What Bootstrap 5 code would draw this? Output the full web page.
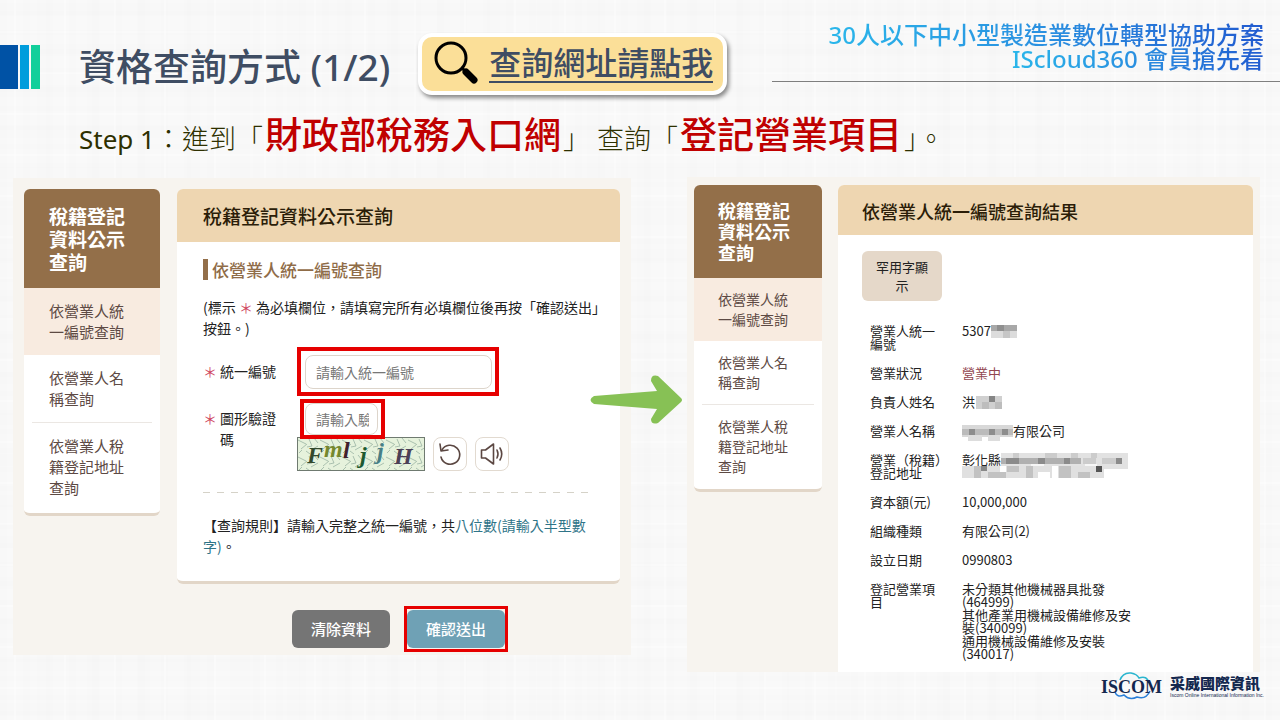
<!DOCTYPE html>
<html lang="zh-Hant">
<head>
<meta charset="utf-8">
<meta name="viewport" content="width=device-width, initial-scale=1">
<title>資格查詢方式</title>
<link href="https://cdn.jsdelivr.net/npm/bootstrap@5.3.0/dist/css/bootstrap.min.css" rel="stylesheet">
<style>
  body {
    font-family: "Noto Sans CJK TC", sans-serif;
    color: #222;
    background-color: #f9f9f9;
    background-image:
      repeating-linear-gradient(90deg, transparent 0 14px, rgba(255,255,255,.35) 14px 16px, transparent 16px 37px, rgba(0,0,0,.005) 37px 50px),
      repeating-linear-gradient(0deg, transparent 0 11px, rgba(255,255,255,.3) 11px 13px, transparent 13px 29px, rgba(0,0,0,.005) 29px 41px),
      repeating-linear-gradient(90deg, rgba(0,0,0,.005) 0 7px, transparent 7px 23px),
      repeating-linear-gradient(0deg, rgba(0,0,0,.005) 0 5px, transparent 5px 19px);
  }
  .deck { font-family: "Noto Sans", "Noto Sans CJK TC", sans-serif; }
  .top-bar { padding-top: 23px; }
  .title-row { margin-top: 10px; height: 68px; }
  .stripe { height: 44px; width: 9px; }
  .stripe-a { width: 18px; background: #0052a5; }
  .stripe-b { background: #009ddc; }
  .stripe-c { background: #12cf9b; }
  .stripes { gap: 2px; width: 40px; }
  .slide-title { font-size: 37px; line-height: 48px; color: #3f4d63; margin: 0 28px 0 39px; font-weight: 500; white-space: nowrap; }
  .query-link {
    background: #fbdf98; border: 4px solid #fff; border-radius: 14px; padding: 2px 10px 2px 12px;
    box-shadow: 2px 3px 4px rgba(0,0,0,.45); color: #3f4d63; font-size: 32px;
    margin-bottom: 6px; height: 62px; gap: 11px; white-space: nowrap; font-weight: 500;
  }
  .query-link span { border-bottom: 2px solid #3f4d63; line-height: 36px; }
  .promo { width: 508px; border-bottom: 1px solid #7f7f7f; height: 59px; padding-right: 16px; }
  .promo span {
    display: block; width: max-content; margin-left: auto; font-size: 24px; line-height: 24px; font-weight: 500; color: transparent;
    background: linear-gradient(90deg, #2ab6ea, #2a8fe0 50%, #215bd0); background-clip: text; -webkit-background-clip: text;
  }
  .step { font-size: 27px; line-height: 48px; padding: 10px 0 0 79px; height: 76px; color: #2e3000; font-weight: 300; margin: 0; }
  .step span { font-size: 26px; font-weight: 400; }
  .step strong { font-size: 37px; font-weight: 500; color: #c00000; margin: 0 2px; }

  .panels { padding: 0 20px 0 13px; }
  .shot { background: #f7f4ef; min-width: 0; }
  .shot-a { flex: 596 1 0; padding: 11px 11px 7px; margin-top: 1px; }
  .shot-b { flex: 559 1 0; padding: 8px 7px 0; }
  .between { width: 56px; }
  .between svg { position: absolute; left: -41px; top: 197px; }
  .side { background: #fff; border-bottom: 3px solid #e2d6c8; border-radius: 6px; overflow: hidden; color: #5d4a44; }
  .side h2 { background: #936f49; color: #fff; margin: 0; font-weight: 600; }
  .side a { display: block; color: inherit; text-decoration: none; }
  .side a.on { background: #f8ebe0; }
  .side hr { margin: 0 8px; border-color: #d8d0c8; opacity: .5; }
  .shot-a .side { width: 136px; }
  .shot-a .side h2 { font-size: 19px; line-height: 23px; padding: 15px 25px; }
  .shot-a .side a { font-size: 15px; line-height: 21px; padding: 12px 25px 13px; }
  .shot-a .side a:last-child { padding-bottom: 15px; }
  .shot-b .side { width: 128px; }
  .shot-b .side h2 { font-size: 18px; line-height: 21px; padding: 15px 24px; }
  .shot-b .side a { font-size: 14px; line-height: 20px; padding: 11px 24px 12px; }
  .shot-b .side a:last-child { padding-bottom: 13px; }

  .pane { background: #fff; border-radius: 6px; min-width: 0; }
  .pane > h2 { background: #eed6b1; color: #2b1d08; margin: 0; font-weight: 500; border-radius: 6px 6px 0 0; }
  .shot-a .pane { margin-left: 17px; border-bottom: 3px solid #e2d6c8; font-size: 14px; line-height: 21px; }
  .shot-a .pane > h2 { font-size: 19px; line-height: 53px; padding: 0 26px; }
  .pane-body { padding: 17px 0 24px 26px; }
  .pane-body h3 { font-size: 17px; line-height: 21px; color: #8f6c48; border-left: 5px solid #936f49; padding-left: 4px; margin: 0 0 17px; }
  .pane-body p { margin: 0; white-space: nowrap; }
  .star { color: #cf4660; }
  .tag { width: 94px; }
  .tag-code { padding-top: 12px; }
  .tag .star { width: 17px; flex: none; }
  .frame { border: 4px solid #e60000; position: relative; }
  .frame input { border: 1px solid #ddd5cb; border-radius: 8px; padding: 0 10px; font-size: 14px; height: 34px; color: #222; display: block; background: #fff; }
  .frame input::placeholder { color: #777; opacity: 1; }
  .frame-a { width: 202px; height: 49px; padding: 4px 3px 3px 4px; }
  .frame-b { width: 85px; height: 40px; margin: 3px 0 0 3px; padding: 0 3px 0 1px; }
  .frame-b input { height: 32px; padding-right: 8px; }
  .captcha { margin-top: -2px; gap: 8px; }
  .tool { width: 34px; height: 34px; border: 1px solid #e2dad0; border-radius: 8px; background: #fff; color: #5b4742; padding: 0; }
  .rule { height: 1px; margin: 21px 27px 22px 0; background: repeating-linear-gradient(90deg, #d5d2c8 0 7px, transparent 7px 14px); }
  .teal { color: #2f7488; }
  .actions { margin-top: 26px; padding-right: 112px; gap: 14px; }
  .act { font-size: 15px; line-height: 38px; padding: 0; width: 98px; border: 0; border-radius: 6px; color: #fff; font-weight: 500; }
  .act-clear { background: #757575; }
  .act-send { background: #6fa1b5; }
  .frame-c { border-width: 3px; padding: 1px 0; margin: -4px 0; }

  .shot-b .pane { margin-left: 16px; border-radius: 6px 6px 0 0; height: 487px; }
  .shot-b .pane > h2 { font-size: 18px; line-height: 50px; padding: 1px 24px 0; height: 50px; }
  .rare { width: 80px; height: 50px; background: #e5d8c9; border: 0; border-radius: 6px; font-size: 13px; line-height: 19px; padding: 0 12px; margin: 16px 24px 15px; color: #222; }
  .facts { --bs-table-bg: transparent; font-size: 13px; line-height: 13px; margin: 0 0 0 24px; width: 280px; color: #222; }
  .facts th { font-weight: 400; width: 92px; white-space: nowrap; padding-right: 4px; }
  .facts td { white-space: nowrap; }
  .facts .state { color: #924650; }
  .facts svg { vertical-align: top; margin: 0 0 -6px; }
  .brand { padding-right: 16px; color: #14284f; gap: 4px; }
  .brand b { font-size: 15px; line-height: 18px; font-weight: 900; display: block; }
  .brand small { font: 5px/6px "Liberation Sans", sans-serif; display: block; white-space: nowrap; }
</style>
</head>
<body>
<header class="deck top-bar d-flex justify-content-between align-items-start">
  <div class="title-row d-flex align-items-center">
    <div class="stripes d-flex"><i class="stripe stripe-a"></i><i class="stripe stripe-b"></i><i class="stripe stripe-c"></i></div>
    <h1 class="slide-title">資格查詢方式 (1/2)</h1>
    <a class="query-link d-flex align-items-center text-decoration-none" href="#">
      <svg width="44" height="46" viewBox="0 0 44 46"><circle cx="17" cy="17" r="15" fill="none" stroke="#000" stroke-width="3"/><path d="M28 27l3 3" stroke="#000" stroke-width="3"/><path d="M32 31l8 8" stroke="#000" stroke-width="7" stroke-linecap="round"/></svg>
      <span>查詢網址請點我</span>
    </a>
  </div>
  <div class="promo"><span>30人以下中小型製造業數位轉型協助方案</span><span>IScloud360 會員搶先看</span></div>
</header>

<p class="deck step"><span>Step 1</span>：進到「<strong>財政部稅務入口網</strong>」 查詢「<strong>登記營業項目</strong>」。</p>

<main class="panels d-flex align-items-start">
  <section class="shot shot-a">
    <div class="d-flex align-items-start">
      <nav class="side flex-shrink-0">
        <h2>稅籍登記<br>資料公示<br>查詢</h2>
        <a class="on" href="#">依營業人統<br>一編號查詢</a>
        <a href="#">依營業人名<br>稱查詢</a>
        <hr>
        <a href="#">依營業人稅<br>籍登記地址<br>查詢</a>
      </nav>
      <form class="pane flex-grow-1" id="lookup">
        <h2>稅籍登記資料公示查詢</h2>
        <div class="pane-body">
          <h3>依營業人統一編號查詢</h3>
          <p>(標示 <span class="star">＊</span> 為必填欄位，請填寫完所有必填欄位後再按「確認送出」<br>按鈕。)</p>
          <div class="d-flex align-items-center mt-2">
            <label class="tag d-flex" for="ban"><span class="star">＊</span>統一編號</label>
            <div class="frame frame-a"><input class="w-100" id="ban" type="text" placeholder="請輸入統一編號"></div>
          </div>
          <div class="d-flex align-items-start">
            <label class="tag tag-code d-flex" for="code"><span class="star">＊</span><span>圖形驗證<br>碼</span></label>
            <div>
              <div class="frame frame-b"><input class="w-100" id="code" type="text" placeholder="請輸入驗證碼"></div>
              <div class="captcha d-flex">
                <svg width="128" height="34" viewBox="0 0 128 34">
                  <defs><pattern id="scratch" width="22" height="17" patternUnits="userSpaceOnUse"><path d="M1 3l8 4M4 12l6-5M12 2l3 7M14 13l7-4M17 1l4 5M2 16l3-3M9 14l4 3M10 10l5-1" stroke="#8fab9b" stroke-width=".7" fill="none"/></pattern></defs>
                  <rect x=".5" y=".5" width="127" height="33" fill="#e6f2dc"/><rect x=".5" y=".5" width="127" height="33" fill="url(#scratch)" stroke="#6f7a70"/>
                  <g font-family="Liberation Serif, serif" font-weight="700" font-style="italic" font-size="24">
                    <text x="10" y="26" fill="#33492c">F</text><text x="27" y="20" fill="#75882d">m</text><text x="46" y="21" fill="#40202b">l</text><text x="63" y="26" fill="#1d5a30">j</text><text x="80" y="22" fill="#477f86">j</text><text x="97" y="27" fill="#4b4056">H</text>
                  </g>
                </svg>
                <button class="tool" type="button" aria-label="更新"><svg width="26" height="26" viewBox="0 0 26 26" fill="none" stroke="currentColor" stroke-width="1.6" stroke-linecap="round" stroke-linejoin="round"><path d="M5 9a9.500 9.500 0 1 1-1 7"/><path d="M3 3l1 7 7-1"/></svg></button>
                <button class="tool" type="button" aria-label="播放"><svg width="26" height="26" viewBox="0 0 26 26" fill="none" stroke="currentColor" stroke-width="1.6" stroke-linecap="round" stroke-linejoin="round"><path d="M2.500 9v8h4l8 6V3l-8 6z"/><path d="M18 9q2 4 0 8M21 7q3.500 6 0 12"/></svg></button>
              </div>
            </div>
          </div>
          <div class="rule"></div>
          <p>【查詢規則】請輸入完整之統一編號，共<span class="teal">八位數(請輸入半型數<br>字)</span>。</p>
        </div>
      </form>
    </div>
    <div class="actions d-flex justify-content-end align-items-center">
      <button class="act act-clear" type="reset" form="lookup">清除資料</button>
      <div class="frame frame-c"><button class="act act-send d-block" type="submit" form="lookup">確認送出</button></div>
    </div>
  </section>

  <div class="between position-relative flex-shrink-0">
    <svg width="94" height="52" viewBox="0 0 94 52"><path d="M4 22L67 17L61 7Q61 0 68 2L91 24Q93 26 91 28L68 49Q61 51 61 45L67 35L4 30Q-3 26 4 22z" fill="#87c155"/></svg>
  </div>

  <section class="shot shot-b">
    <div class="d-flex align-items-start">
      <nav class="side flex-shrink-0">
        <h2>稅籍登記<br>資料公示<br>查詢</h2>
        <a class="on" href="#">依營業人統<br>一編號查詢</a>
        <a href="#">依營業人名<br>稱查詢</a>
        <hr>
        <a href="#">依營業人稅<br>籍登記地址<br>查詢</a>
      </nav>
      <div class="pane flex-grow-1">
        <h2>依營業人統一編號查詢結果</h2>
        <button class="rare d-block" type="button">罕用字顯示</button>
        <table class="table table-borderless facts">
          <tbody>
            <tr><th scope="row">營業人統一<br>編號</th><td>5307<svg width="26" height="14"><path fill="#a8a8a8" d="M0 1h26v6H0z"/><path fill="#8f8f8f" d="M6 1h7v6H6z"/><path fill="#dcdcdc" d="M0 7h26v7H0z"/><path fill="#c6c6c6" d="M12 7h7v7h-7z"/></svg></td></tr>
            <tr><th scope="row">營業狀況</th><td class="state">營業中</td></tr>
            <tr><th scope="row">負責人姓名</th><td>洪<svg width="27" height="14"><path fill="#d0d0d0" d="M1 1h26v13H1z"/><path fill="#858585" d="M14 1h6v6h-6z"/><path fill="#bdbdbd" d="M7 7h7v7H7zM20 7h7v7h-7z"/></svg></td></tr>
            <tr><th scope="row">營業人名稱</th><td><svg width="51" height="19"><path fill="#d8d8d8" d="M0 1h51v12H0z"/><path fill="#bbb" d="M0 5h51v6H0z"/><path fill="#8d8d8d" d="M7 5h6v6H7zM27 5h6v6h-6zM40 5h6v6h-6z"/><path fill="#ddd" d="M6 11h14v6H6zM26 11h12v6H26z"/></svg>有限公司</td></tr>
            <tr><th scope="row">營業（稅籍）<br>登記地址</th><td>彰化縣<svg width="127" height="17"><path fill="#e2e2e2" d="M0 0h127v16H0z"/><path fill="#b0b0b0" d="M0 5h80v6H0z"/><path fill="#8b8b8b" d="M5 5h13v6H5zM37 5h7v6h-7zM63 5h6v6h-6zM115 5h6v6h-6z"/><path fill="#ccc" d="M12 0h6v5h-6zM44 0h12v5H44zM70 0h7v5h-7zM90 0h6v5h-6zM82 5h13v6H82zM101 5h14v6h-14z"/><path fill="#f6f6f6" d="M30 11h13v6H30zM84 11h12v6H84z"/></svg><br><svg width="142" height="12"><path fill="#e0e0e0" d="M0 0h142v12H0z"/><path fill="#c2c2c2" d="M12 0h7v12h-7zM26 6h18v6H26zM45 0h12v6H45zM64 0h7v12h-7zM97 0h12v12H97zM116 6h12v6h-12z"/><path fill="#888" d="M19 0h6v5h-6z"/><path fill="#555" d="M134 0h6v6h-6z"/><path fill="#fff" d="M38 0h6v6h-6zM76 6h12v6H76zM90 0h6v12h-6z"/></svg></td></tr>
            <tr><th scope="row">資本額(元)</th><td>10,000,000</td></tr>
            <tr><th scope="row">組織種類</th><td>有限公司(2)</td></tr>
            <tr><th scope="row">設立日期</th><td>0990803</td></tr>
            <tr><th scope="row">登記營業項<br>目</th><td>未分類其他機械器具批發<br>(464999)<br>其他產業用機械設備維修及安<br>裝(340099)<br>通用機械設備維修及安裝<br>(340017)</td></tr>
          </tbody>
        </table>
      </div>
    </div>
  </section>
</main>

<footer class="brand d-flex justify-content-end align-items-center">
  <svg width="66" height="28" viewBox="0 0 66 28" role="img" aria-label="ISCOM">
    <path d="M20 8Q23 0 31 1Q37 2 39 6Q47 3 49 11" fill="none" stroke="#2bb5cf" stroke-width="1.500"/>
    <path d="M15 20Q17 26 24 23Q30 29 37 25Q46 28 50 19" fill="none" stroke="#2a7fd8" stroke-width="1.500"/>
    <text x="1" y="21" font-family="Liberation Serif, serif" font-size="18" font-weight="700" fill="#14284f">ISCOM</text>
  </svg>
  <div><b>采威國際資訊</b><small>Iscom Online International Information Inc.</small></div>
</footer>
<script src="https://cdn.jsdelivr.net/npm/bootstrap@5.3.0/dist/js/bootstrap.bundle.min.js"></script>
</body>
</html>
